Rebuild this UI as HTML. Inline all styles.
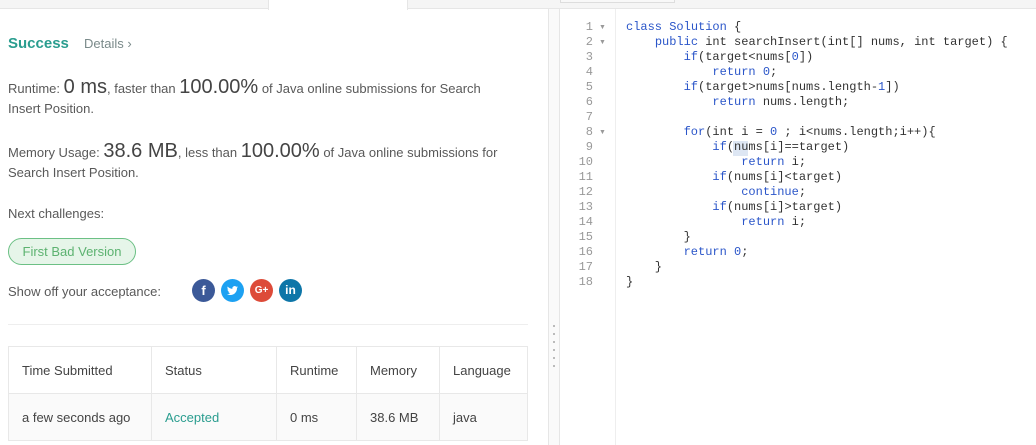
<!DOCTYPE html>
<html><head><style>
*{margin:0;padding:0;box-sizing:border-box}
body{width:1036px;height:445px;overflow:hidden;background:#fff;font-family:"Liberation Sans",sans-serif;color:#555;position:relative}
.abs{position:absolute;white-space:nowrap}
.t{font-size:13px;color:#595959}
.big{font-size:20px;color:#444}
.code{font-family:"Liberation Mono",monospace;font-size:12px;line-height:15px;color:#333;white-space:pre}
.k{color:#2b56c9}
.n{color:#2b56c9}
.gut{font-family:"Liberation Mono",monospace;font-size:12px;line-height:15px;color:#999;text-align:right;width:36px;white-space:normal}
td{border:1px solid #e8e8e8;font-size:13px;color:#444;padding-left:13px;height:47px}
</style></head><body>
<div class="abs" style="left:0;top:0;width:548px;height:9px;background:#f5f5f5;border-bottom:1px solid #e6e6e6"></div>
<div class="abs" style="left:268px;top:0;width:140px;height:10px;background:#fff;border-left:1px solid #e6e6e6;border-right:1px solid #e6e6e6"></div>
<div class="abs" style="left:548px;top:0;width:488px;height:9px;background:#f5f5f5;border-bottom:1px solid #e6e6e6"></div>
<div class="abs" style="left:560px;top:0;width:115px;height:3px;border:1px solid #ddd;border-top:none;background:#f8f8f8"></div>
<div class="abs" style="left:548px;top:9px;width:12px;height:436px;background:#fafafa;border-left:1px solid #e6e6e6;border-right:1px solid #e6e6e6"></div>
<div class="abs" style="left:553px;top:325px;width:2px;height:42px;background:repeating-linear-gradient(#bbb 0 2px,transparent 2px 8px)"></div>
<div class="abs" style="left:615px;top:9px;width:1px;height:436px;background:#eee"></div>

<div class="abs" style="left:8px;top:35px;font-size:15px;font-weight:bold;color:#2a9d8f">Success</div>
<div class="abs t" style="left:84px;top:36px;color:#7a8a8a">Details ›</div>
<div class="abs t" style="left:8px;top:76px;"><span style="line-height:22px">Runtime: <span class="big">0 ms</span>, faster than <span class="big">100.00%</span> of Java online submissions for Search</span></div>
<div class="abs t" style="left:8px;top:101px">Insert Position.</div>
<div class="abs t" style="left:8px;top:140px">Memory Usage: <span class="big">38.6 MB</span>, less than <span class="big">100.00%</span> of Java online submissions for</div>
<div class="abs t" style="left:8px;top:165px">Search Insert Position.</div>
<div class="abs t" style="left:8px;top:206px">Next challenges:</div>
<div class="abs" style="left:8px;top:238px;width:128px;height:27px;border:1px solid #6cc085;border-radius:14px;background:#e6f5e9;color:#5cb270;font-size:13px;text-align:center;line-height:25px">First Bad Version</div>
<div class="abs t" style="left:8px;top:284px">Show off your acceptance:</div>
<div class="abs" style="left:192px;top:279px;width:23px;height:23px;border-radius:50%;background:#3b5998;color:#fff;font-weight:bold;font-size:13px;text-align:center;line-height:23px">f</div>
<div class="abs" style="left:221px;top:279px;width:23px;height:23px;border-radius:50%;background:#1da1f2">
<svg width="23" height="23" viewBox="0 0 23 23"><path d="M17 8.2c-.4.2-.9.3-1.3.4.5-.3.8-.7 1-1.3-.4.3-.9.4-1.4.5a2.3 2.3 0 0 0-3.9 2.1c-1.9-.1-3.6-1-4.7-2.4-.6 1-.3 2.3.7 3-.4 0-.7-.1-1-.3 0 1.100.8 2.100 1.800 2.300-.3.1-.7.1-1 0 .3.9 1.100 1.600 2.100 1.600-.9.7-2 1.100-3.300 1C7 15.700 8.200 16 9.400 16c4.300 0 6.700-3.600 6.600-6.900.4-.3.800-.6 1-.9z" fill="#fff"/></svg></div>
<div class="abs" style="left:250px;top:279px;width:23px;height:23px;border-radius:50%;background:#dd4b39;color:#fff;font-weight:bold;font-size:10px;text-align:center;line-height:23px">G+</div>
<div class="abs" style="left:279px;top:279px;width:23px;height:23px;border-radius:50%;background:#0e76a8;color:#fff;font-weight:bold;font-size:12px;text-align:center;line-height:23px">in</div>
<div class="abs" style="left:8px;top:324px;width:520px;height:1px;background:#eee"></div>
<table class="abs" style="left:8px;top:346px;border-collapse:collapse;width:520px">
<tr><td style="width:143px">Time Submitted</td><td style="width:125px">Status</td><td style="width:80px">Runtime</td><td style="width:83px">Memory</td><td>Language</td></tr>
<tr style="background:#fafafa"><td>a few seconds ago</td><td style="color:#2a9d8f">Accepted</td><td>0 ms</td><td>38.6 MB</td><td>java</td></tr>
</table>

<div class="abs gut" style="left:557px;top:20px">1<br>2<br>3<br>4<br>5<br>6<br>7<br>8<br>9<br>10<br>11<br>12<br>13<br>14<br>15<br>16<br>17<br>18</div>
<div class="abs" style="left:599px;top:20px;font-size:7px;line-height:15px;color:#999;white-space:normal">▼<br>▼<br><br><br><br><br><br>▼</div>
<div class="abs" style="left:733px;top:141px;width:15px;height:15px;background:#dde6f3"></div>
<pre class="abs code" style="left:626px;top:20px"><span class="k">class</span> <span class="k">Solution</span> {
    <span class="k">public</span> int searchInsert(int[] nums, int target) {
        <span class="k">if</span>(target&lt;nums[<span class="n">0</span>])
            <span class="k">return</span> <span class="n">0</span>;
        <span class="k">if</span>(target&gt;nums[nums.length-<span class="n">1</span>])
            <span class="k">return</span> nums.length;

        <span class="k">for</span>(int i = <span class="n">0</span> ; i&lt;nums.length;i++){
            <span class="k">if</span>(nums[i]==target)
                <span class="k">return</span> i;
            <span class="k">if</span>(nums[i]&lt;target)
                <span class="k">continue</span>;
            <span class="k">if</span>(nums[i]&gt;target)
                <span class="k">return</span> i;
        }
        <span class="k">return</span> <span class="n">0</span>;
    }
}</pre>
</body></html>
